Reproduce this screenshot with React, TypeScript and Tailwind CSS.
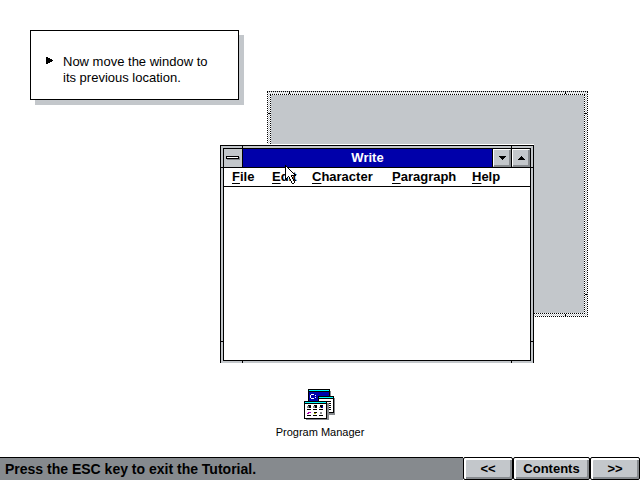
import React from 'react';

const menus = [
  { label: 'File', width: 'w-10' },
  { label: 'Edit', width: 'w-10' },
  { label: 'Character', width: 'w-20' },
  { label: 'Paragraph', width: 'w-20' },
  { label: 'Help', width: 'w-10' },
];

const navButtons = [
  { label: '<<', name: 'Previous', width: 'w-[50px]' },
  { label: 'Contents', name: 'Contents', width: 'w-[77px]' },
  { label: '>>', name: 'Next', width: 'w-[50px]' },
];

const Cursor = () => (
  <svg className="pointer-events-none absolute left-[285px] top-[165px]" width="11" height="19" viewBox="0 0 11 19" shapeRendering="crispEdges">
    <path d="M0 0h1v1h1v1h1v1h1v1h1v1h1v1h1v1h1v1h1v1h1v1h1v1H7v1h1v2h1v2h1v2H9v1H7v-1H6v-2H5v-2H4v-2H3v1H2v1H1v1H0z" fill="#000" />
    <path d="M1 2h1v1h1v1h1v1h1v1h1v1h1v1h1v1h1v1H6v2h1v2h1v2h1v2H7v-2H6v-2H5v-2H4v-1H3v1H2v1H1z" fill="#fff" />
  </svg>
);

const ProgramIcon = () => (
  <svg width="32" height="32" viewBox="0 0 32 32" shapeRendering="crispEdges">
    {/* DOS prompt window */}
    <path d="M6 2h21v20H6z" fill="#868a8e" />
    <path d="M4 0h22v20H4z" fill="#000" />
    <path d="M5 1h20v1H5z" fill="#00ffff" />
    <path d="M5 3h20v16H5z" fill="#0000aa" />
    <path d="M7 5h3v1H7zM6 6h1v3H6zM7 9h3v1H7zM11 6h1v1h-1zM11 8h1v1h-1z" fill="#fff" />
    {/* document */}
    <path d="M16 9h15v17H16z" fill="#868a8e" />
    <path d="M14 7h16v17H14z" fill="#000" />
    <path d="M15 8h14v1H15z" fill="#00ffff" />
    <path d="M15 10h14v13H15z" fill="#fff" />
    <path d="M17 12h10v1H17zM17 14h10v1H17zM17 16h10v1H17zM17 18h10v1H17zM17 20h10v1H17z" fill="#000" />
    {/* group window */}
    <path d="M2 14h23v17H2z" fill="#868a8e" />
    <path d="M0 12h23v18H0z" fill="#000" />
    <path d="M1 13h21v1H1z" fill="#00ffff" />
    <path d="M1 15h21v14H1z" fill="#fff" />
    <path d="M4 16h3v3H4zM10 16h3v3h-3zM16 16h3v3h-3zM3 20h4v1H3zM9 20h4v1H9zM15 20h4v1h-4zM3 26h4v1H3zM9 26h4v1H9zM15 26h4v1h-4zM10 23h3v1h-3z" fill="#000" />
    <path d="M3 17h2v2H3zM9 17h2v2H9zM15 18h2v1h-2zM16 23h2v2h-2z" fill="#868a8e" />
    <path d="M4 23h3v1H4zM3 24h2v1H3z" fill="#aa00aa" />
    <path d="M10 24h2v1h-2z" fill="#aaaa00" />
    <path d="M18 17h1v2h-1z" fill="#0000aa" />
  </svg>
);

// Corner marks of a sizing frame: only their ends show beside the content
const FrameMarks = () => (
  <>
    <div className="my-[21px] border-y border-black [grid-area:1/1]" />
    <div className="mx-[21px] border-x border-black [grid-area:1/1]" />
  </>
);

const GhostWindow = () => (
  <div className="absolute left-[267px] top-[91px] grid h-[226px] w-[321px] border border-dotted border-black bg-[conic-gradient(#c3c7cb_25%,#fff_0_50%,#c3c7cb_0_75%,#fff_0)] bg-size-[2px_2px]">
    <FrameMarks />
    <div className="m-[2px] bg-white [grid-area:1/1]">
      <div className="h-full border border-dotted border-black bg-[#c3c7cb] bg-clip-padding" />
    </div>
  </div>
);

const titleButton =
  'flex w-[18px] items-center justify-center border border-t-white border-l-white border-r-[#868a8e] border-b-[#868a8e] bg-[#c3c7cb] shadow-[inset_-1px_-1px_0_#868a8e]';

const WriteWindow = () => (
  <div className="absolute left-[220px] top-[145px] grid w-[314px] border-x border-t border-black bg-[#c3c7cb] shadow-[0_-1px_0_#fff]">
    <FrameMarks />
    <div className="m-[2px] border border-black bg-white [grid-area:1/1]">
      <div className="flex h-[19px] border-b border-black bg-[#0000aa]">
        <button aria-label="Control menu" className="flex w-[19px] items-center justify-center border-r border-black bg-[#c3c7cb]">
          <svg width="14" height="4" viewBox="0 0 14 4" shapeRendering="crispEdges">
            <path d="M1 1h13v3H1z" fill="#868a8e" />
            <path d="M0 0h13v3H0z" />
            <path d="M1 1h11v1H1z" fill="#fff" />
          </svg>
        </button>
        <h1 className="flex-1 text-center text-[13px] leading-[18px] font-bold text-white">Write</h1>
        <div className="flex gap-px border-l border-black bg-black">
          <button aria-label="Minimize" className={titleButton}>
            <svg width="7" height="4" viewBox="0 0 7 4" shapeRendering="crispEdges"><path d="M0 0h7v1H6v1H5v1H4v1H3V3H2V2H1V1H0z" /></svg>
          </button>
          <button aria-label="Maximize" className={titleButton}>
            <svg width="7" height="4" viewBox="0 0 7 4" shapeRendering="crispEdges"><path d="M0 4h7V3H6V2H5V1H4V0H3v1H2v1H1v1H0z" /></svg>
          </button>
        </div>
      </div>
      <nav className="flex h-[19px] border-b border-black pl-2 text-[13px] leading-[18px] font-bold">
        {menus.map((menu) => (
          <button key={menu.label} className={`${menu.width} shrink-0 text-left`}>
            <span className="underline underline-offset-2">{menu.label[0]}</span>{menu.label.slice(1)}
          </button>
        ))}
      </nav>
      <div className="h-[173px]" />
    </div>
  </div>
);

const App = () => {
  return (
    <div className="flex min-h-screen flex-col bg-white font-['Liberation_Sans',Arial,sans-serif] text-black">
      <main className="relative flex flex-1 flex-col items-start justify-between px-[30px] pt-[30px] pb-[14px]">
        <section className="flex gap-[10px] border border-black bg-white pt-[23px] pr-[30px] pb-[13px] pl-[15px] shadow-[5px_5px_0_#c3c7cb]">
          <svg className="mt-[3px] shrink-0" width="7" height="7" viewBox="0 0 7 7" shapeRendering="crispEdges">
            <path d="M0 0h2v1h2v1h2v1h1v1H6v1H4v1H2v1H0z" />
          </svg>
          <p className="text-[13px] leading-4 whitespace-nowrap">
            Now move the window to
            <br />
            its previous location.
          </p>
        </section>

        <GhostWindow />
        <WriteWindow />

        <button className="flex flex-col items-center self-center text-[11px] leading-[22px] whitespace-nowrap">
          <ProgramIcon />
          Program Manager
        </button>

        <Cursor />
      </main>

      <footer className="flex h-[23px] border-t border-black bg-[#868a8e] text-[13px] font-bold">
        <p className="flex-1 pl-[5px] text-sm leading-[22px]">Press the ESC key to exit the Tutorial.</p>
        <div className="-mt-px flex bg-white">
          {navButtons.map((button) => (
            <button key={button.name} aria-label={button.name} className={`${button.width} rounded-[2px] border border-black bg-[#c3c7cb] shadow-[inset_2px_2px_0_#fff,inset_-2px_-2px_0_#868a8e]`}>
              {button.label}
            </button>
          ))}
        </div>
      </footer>
    </div>
  );
};

export default App;
